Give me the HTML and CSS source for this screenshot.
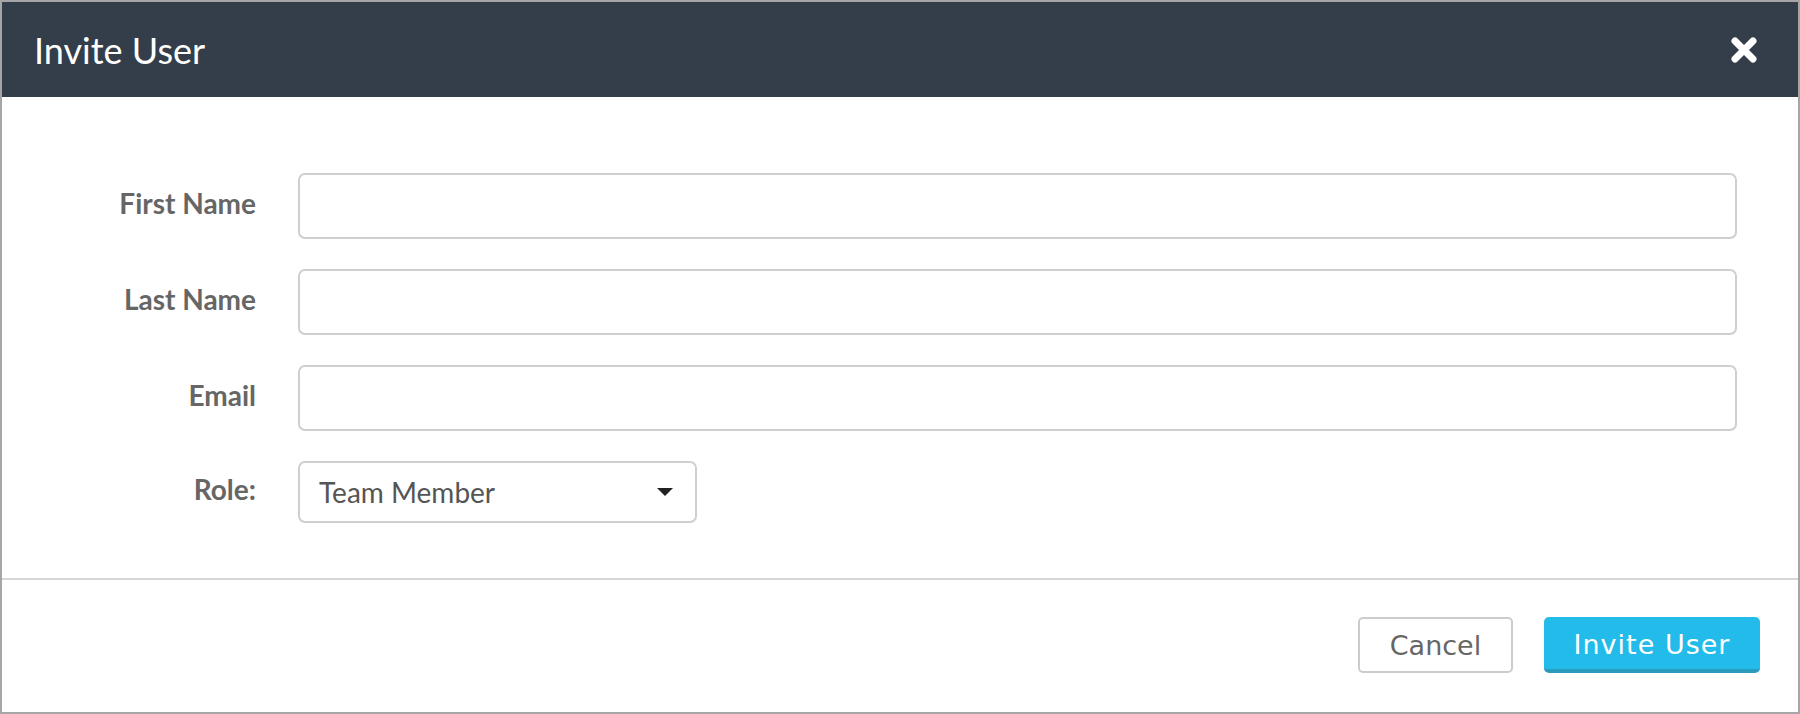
FILE: index.html
```html
<!DOCTYPE html>
<html>
<head>
  <meta charset="utf-8">
  <meta name="viewport" content="width=device-width">
  <title>Invite User</title>

  <link rel="stylesheet" href="styles.css">

</head>
<body>
  <div id="dialog">

    <div class="header">
      <h1>Invite User</h1>
      <span class="closeBtn">
        <svg width="28" height="28" viewBox="0 0 28 28">
          <path d="M5 5 L23 23 M23 5 L5 23" stroke="#ffffff" stroke-width="7" stroke-linecap="round"/>
        </svg>
      </span>
    </div>

    <div class="form">
      <div class="row">
        <label class="label" for="firstName">First Name</label>
        <input type="text" class="field" id="firstName">
      </div>
      <div class="row">
        <label class="label" for="lastName">Last Name</label>
        <input type="text" class="field" id="lastName">
      </div>
      <div class="row">
        <label class="label" for="email">Email</label>
        <input type="text" class="field" id="email">
      </div>
      <div class="row">
        <label class="label">Role:</label>
        <div class="select">
          <span>Team Member</span>
          <span class="caret"></span>
        </div>
      </div>
    </div>

    <div class="footer">
      <span class="btn cancelBtn">Cancel</span>
      <span class="btn inviteBtn">Invite User</span>
    </div>

  </div>
</body>
</html>
```

FILE: styles.css
```css
* {
  box-sizing: border-box;
}

body {
  margin: 0;
  font-family: Lato, "Noto Sans", sans-serif;
}

#dialog {
  width: 1800px;
  height: 714px;
  border: 2px solid #a6a6a6;
  background: #ffffff;
  display: flex;
  flex-direction: column;
}

.header {
  height: 95px;
  background-color: #343d4a;
  color: #ffffff;
  display: flex;
  align-items: center;
  justify-content: space-between;
  padding: 0 40px 0 32px;
}

h1 {
  margin: 0;
  font-weight: normal;
  font-size: 36px;
}

.closeBtn {
  display: flex;
}

.form {
  padding: 76px 61px 55px 0;
  display: flex;
  flex-direction: column;
  gap: 30px;
  border-bottom: 2px solid #d6d6d6;
}

.row {
  display: flex;
  align-items: center;
  gap: 42px;
}

.label {
  width: 254px;
  text-align: right;
  font-weight: bold;
  font-size: 28px;
  color: #666666;
  padding-bottom: 6px;
}

.field {
  flex: 1;
  height: 66px;
  border: 2px solid #cfcfcf;
  border-radius: 7px;
  font-size: 24px;
}

.select {
  width: 399px;
  height: 62px;
  border: 2px solid #cfcfcf;
  border-radius: 7px;
  display: flex;
  align-items: center;
  justify-content: space-between;
  padding: 0 22px 0 19px;
  font-size: 28px;
  color: #555555;
}

.caret {
  width: 0;
  height: 0;
  border-left: 8px solid transparent;
  border-right: 8px solid transparent;
  border-top: 8px solid #222222;
}

.footer {
  flex: 1;
  display: flex;
  justify-content: flex-end;
  align-items: flex-start;
  gap: 31px;
  padding: 37px 38px 0 0;
}

.btn {
  height: 56px;
  display: flex;
  align-items: center;
  justify-content: center;
  font-family: "DejaVu Sans", Verdana, sans-serif;
  font-size: 27px;
  border-radius: 5px;
}

.cancelBtn {
  width: 155px;
  border: 2px solid #cccccc;
  color: #666666;
}

.inviteBtn {
  width: 216px;
  background-color: #22bbea;
  border-bottom: 4px solid #2a9bbd;
  color: #ffffff;
  padding-top: 2px;
  letter-spacing: 1px;
}
```
